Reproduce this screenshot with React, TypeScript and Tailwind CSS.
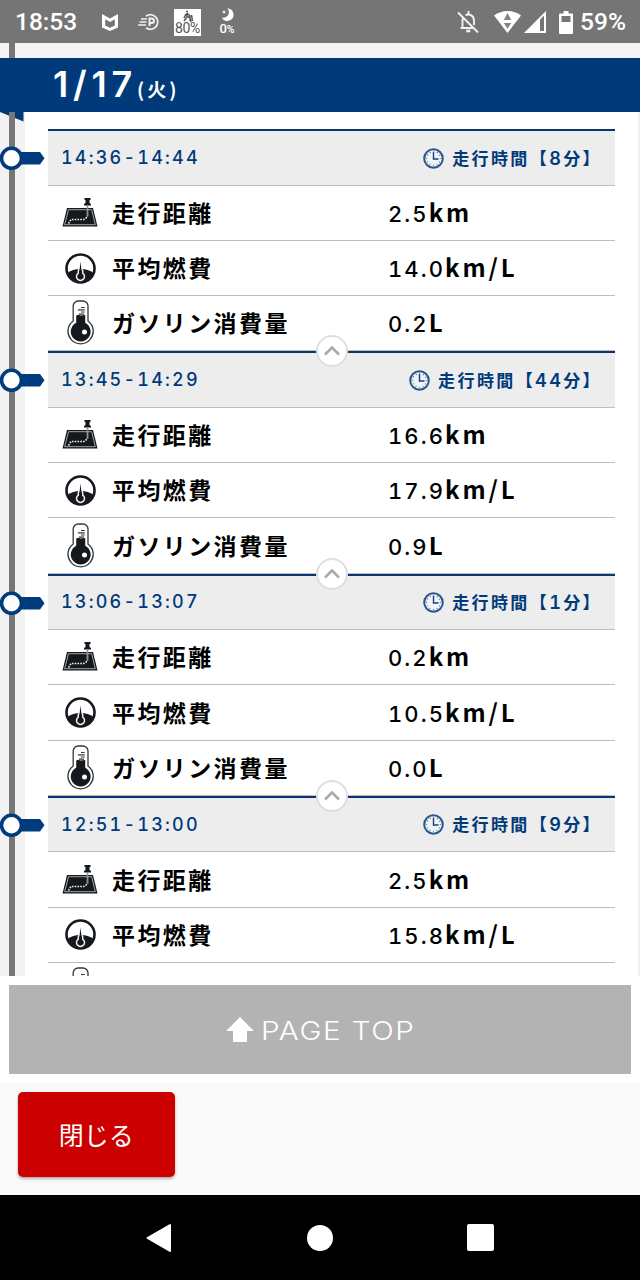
import React from 'react';

interface Trip {
  time: string;
  minutes: string;
  distance: string;
  mileage: string;
  fuel?: string;
}

const trips: Trip[] = [
  { time: '14:36-14:44', minutes: '8', distance: '2.5', mileage: '14.0', fuel: '0.2' },
  { time: '13:45-14:29', minutes: '44', distance: '16.6', mileage: '17.9', fuel: '0.9' },
  { time: '13:06-13:07', minutes: '1', distance: '0.2', mileage: '10.5', fuel: '0.0' },
  { time: '12:51-13:00', minutes: '9', distance: '2.5', mileage: '15.8' },
];

const MapIcon = () => (
  <svg className="h-[30px] w-[36px]" viewBox="0 0 36 30">
    <path d="M5 10h26l4.500 18.500H.5z" fill="#15191e" />
    <path d="M6.500 11.700h23.200l3.600 15H2.600z" fill="none" stroke="#aeb2b6" strokeWidth="0.900" />
    <path d="M6.500 25.500l2.500-4h13l3.500-2.500V11" fill="none" stroke="#f4f4f4" strokeWidth="1.500" strokeDasharray="1.600 1.200" />
    <path d="M22.500 0h6v2h-1v3l1.500 1v1.500h-7V6l1.500-1V2h-1z" fill="#15191e" />
    <path d="M25.500 7.500V18" stroke="#8d9195" strokeWidth="1.500" />
  </svg>
);

const GaugeIcon = () => (
  <svg className="h-[31px] w-[31px]" viewBox="0 0 31 31">
    <circle cx="15.500" cy="15.500" r="14" fill="#fff" stroke="#15191e" strokeWidth="2.600" />
    <path d="M2.500 20C6 17.200 10 16 15.500 16S25 17.200 28.500 20A14 14 0 0 1 2.500 20z" fill="#15191e" />
    <path d="M13.300 17.800l1-2h2.400l1 2v2.300a4 4 0 1 1-4.400 0z" fill="#15191e" stroke="#f2f2f2" strokeWidth="1.500" />
    <path d="M15.500 8.500l1.300 12h-2.600z" fill="#15191e" />
    <circle cx="15.500" cy="23" r="1.900" fill="#15191e" />
  </svg>
);

const ThermometerIcon = () => (
  <svg className="h-[46px] w-[27px]" viewBox="0 0 27 46">
    <path d="M6.200 21V6A5 5 0 0 1 11.200 1h4.800A5 5 0 0 1 21 6v15A12.600 12.600 0 1 1 6.200 21z" fill="#fff" stroke="#33373b" strokeWidth="1.300" />
    <path d="M9.200 15.600l2-.8 2.500.8 4.500-.5v7.700a9.900 9.900 0 1 1-9 0z" fill="#15191e" />
    <path d="M14 7.500h3.700M11 9.800h6.700M14 12h3.700M12 14.100h5" stroke="#33373b" strokeWidth="1.200" />
    <circle cx="17.500" cy="32" r="2.500" fill="#fff" />
  </svg>
);

const ClockIcon = () => (
  <svg className="h-[21px] w-[21px]" viewBox="0 0 21 21">
    <circle cx="10.500" cy="10.500" r="9.300" fill="#f1f4f8" stroke="#2c568a" strokeWidth="2" />
    <circle cx="10.500" cy="10.500" r="7" fill="none" stroke="#4f739d" strokeWidth="1.600" strokeDasharray="0.900 2.765" strokeDashoffset="0.450" />
    <path d="M10.500 4v7h5" fill="none" stroke="#173f75" strokeWidth="1.400" />
  </svg>
);

interface StatRowProps {
  icon: React.ReactNode;
  label: string;
  value?: string;
  unit: string;
}

const StatRow: React.FC<StatRowProps> = ({ icon, label, value, unit }) => (
  <div className="flex h-[55.2px] items-center border-b border-[#bdbdbd] text-black">
    <div className="flex w-[64px] shrink-0 justify-center">{icon}</div>
    {value && (
      <>
        <div className="w-[276px] shrink-0 pb-px font-['Noto_Sans_CJK_JP',sans-serif] text-[23px] leading-none font-bold tracking-[2.4px] whitespace-nowrap">
          {label}
        </div>
        <div className="flex items-baseline pb-px leading-none whitespace-nowrap">
          <span className="font-['Inter','Liberation_Sans',sans-serif] text-[22px] font-medium tracking-[2.1px] tabular-nums">{value}</span>
          <span className="font-['Noto_Sans_CJK_JP',sans-serif] text-[24px] leading-none font-bold tracking-[2.9px]">{unit}</span>
        </div>
      </>
    )}
  </div>
);

const TripBlock: React.FC<{ trip: Trip; first: boolean }> = ({ trip, first }) => (
  <section className="relative h-[222.2px] shrink-0 border-t-2 border-[#0b3470]">
    {/* Timeline marker */}
    <svg className="absolute top-[15px] left-[-48px] h-[24px] w-[46px]" viewBox="0 0 46 24">
      <path d="M20 6h20l4.500 6.200-4.500 6.300H20z" fill="#003c7d" />
      <circle cx="11.500" cy="12.300" r="10" fill="#fff" stroke="#003c7d" strokeWidth="3.600" />
    </svg>

    {!first && (
      <button className="absolute top-[-18px] left-[268px] flex h-[32px] w-[32px] items-center justify-center rounded-full border-2 border-[#dedede] bg-white">
        <svg className="h-[10px] w-[16px]" viewBox="0 0 16 10">
          <path d="M1 8.500l7-7 7 7" fill="none" stroke="#aaa" strokeWidth="2.600" />
        </svg>
      </button>
    )}

    <header className="flex h-[54.6px] items-center justify-between border-b border-[#bdbdbd] bg-[#ededed] pl-[13px] text-[#003a7a]">
      <span className="font-['Inter','Liberation_Sans',sans-serif] text-[18px] leading-none font-medium tracking-[2.2px] tabular-nums">
        {trip.time}
      </span>
      <div className="mr-[13px] flex items-center gap-[8px]">
        <ClockIcon />
        <span className="font-['Noto_Sans_CJK_JP',sans-serif] text-[17px] leading-none font-bold tracking-[2.4px] whitespace-nowrap">
          走行時間【<span className="font-['Inter','Liberation_Sans',sans-serif] text-[18px] font-semibold tabular-nums">{trip.minutes}</span>分】
        </span>
      </div>
    </header>

    <StatRow icon={<MapIcon />} label="走行距離" value={trip.distance} unit="km" />
    <StatRow icon={<GaugeIcon />} label="平均燃費" value={trip.mileage} unit="km/L" />
    <StatRow icon={<ThermometerIcon />} label="ガソリン消費量" value={trip.fuel} unit="L" />
  </section>
);

const StatusBar = () => (
  <div className="flex h-[43px] shrink-0 items-center bg-[#757575] pt-px pr-[14px] pl-[15px] font-['Roboto',sans-serif] font-medium text-white">
    <span className="w-[87px] text-[24.500px] leading-none">18:53</span>
    <svg className="h-[17px] w-[16px]" viewBox="0 0 16 17">
      <path d="M0 0l8 4.500L16 0v13.500L8 17l-8-3.500zM3.200 5.300v6.200L8 13.700l4.800-2.200V5.300L8 8z" fill="#fff" fillRule="evenodd" />
    </svg>
    <svg className="ml-[20px] h-[18px] w-[22px]" viewBox="0 0 22 18" fill="none" stroke="#f0f0f0" strokeWidth="1.700">
      <path d="M8 3.200A7.300 7.300 0 1 1 8 14.800M3 6h6M1.500 9h7M0 12h8" />
      <path d="M11.500 13V5.500h2.200a2.100 2.100 0 0 1 0 4.600h-2" strokeWidth="2" />
    </svg>
    <div className="ml-[14px] flex h-[27px] w-[27px] flex-col items-center bg-white text-[#555]">
      <svg className="mt-px h-[12px] w-[12px] shrink-0" viewBox="0 0 12 12" fill="none" stroke="#555" strokeWidth="1.500">
        <path d="M4 1.500h2M5 3v4l-3 4M5 6l3 2 1 4M5 3l3 3v5M2 8l2-4M9.500 5l1 6" />
      </svg>
      <span className="text-[14px] leading-[13px] font-normal tracking-[-0.3px]">80%</span>
    </div>
    <div className="ml-[17px] flex w-[18px] flex-col items-center">
      <svg className="h-[13px] w-[13px]" viewBox="0 0 13 13">
        <path d="M6 .5A6.200 6.200 0 1 1 .7 9.500C4 10.300 7.200 8.500 7.700 5.500S7.200 1.300 6 .5z" fill="#fff" />
        <circle cx="3" cy="4" r="1.500" fill="#e6e6e6" />
      </svg>
      <span className="mt-[2px] text-[13px] leading-[12px] whitespace-nowrap">0<span className="text-[10.500px]">%</span></span>
    </div>

    <div className="ml-auto flex items-center">
      <svg className="h-[22px] w-[22px]" viewBox="0 0 22 22" fill="none" stroke="#f2f2f2" strokeWidth="1.900">
        <path d="M1 1.500l20 20M5.500 16.500V9.500c0-1 .3-2 .8-2.900M8.500 4.200C12.500 2.200 17 5 17 9.500V14M3.500 17h13M11.500 0v3.500" />
        <path d="M9.300 20h4" strokeWidth="2.600" />
      </svg>
      <svg className="ml-[15px] h-[22px] w-[27px]" viewBox="0 0 27 22">
        <path d="M0 4.500C8-1.500 19-1.500 27 4.500L13.500 22z" fill="#fff" />
        <path d="M13.500 2l3.700 7H9.800zM9.800 12h7.400l-3.700 6z" fill="#858585" />
      </svg>
      <svg className="ml-[3px] h-[22px] w-[22px]" viewBox="0 0 22 22">
        <path d="M22 0v22H0z" fill="#fff" />
        <path d="M16 8.500l4-4V20h-4z" fill="#757575" />
      </svg>
      <svg className="ml-[13px] h-[23px] w-[14px]" viewBox="0 0 14 23">
        <path d="M4.500 0h5v2.500H13a1 1 0 0 1 1 1V22a1 1 0 0 1-1 1H1a1 1 0 0 1-1-1V3.500a1 1 0 0 1 1-1h3.500z" fill="#fff" />
        <path d="M2.500 5h9v6h-9z" fill="#757575" />
      </svg>
      <span className="ml-[7px] text-[24.500px] leading-none">59%</span>
    </div>
  </div>
);

const App: React.FC = () => {
  return (
    <div className="flex h-[1280px] w-[640px] flex-col overflow-hidden bg-white">
      <StatusBar />

      {/* Driving log */}
      <main className="flex h-[933px] shrink-0 flex-col overflow-hidden">
        <div className="flex h-[15px] shrink-0 bg-[#f4f4f4] pl-[9px]">
          <div className="w-[5.500px] bg-[#777]" />
        </div>
        <h1 className="flex h-[54px] shrink-0 items-baseline bg-[#003a7a] pl-[53px] text-white">
          <span className="font-['Inter','Liberation_Sans',sans-serif] text-[36px] leading-[52px] font-semibold tracking-[4.800px]">1/17</span>
          <span className="font-['Noto_Sans_CJK_JP',sans-serif] text-[19px] leading-none font-bold tracking-[3px]">(火)</span>
        </h1>
        <div className="flex min-h-0 flex-1">
          <div className="relative flex w-[25px] shrink-0 bg-[#f2f2f2] pl-[9px]">
            <svg className="absolute top-0 left-0 h-[10px] w-[24px]" viewBox="0 0 24 10">
              <path d="M0 0h23.500v9.500z" fill="#00387a" />
            </svg>
            <div className="relative w-[5.500px] bg-[#777]" />
          </div>
          <div className="flex flex-1 flex-col overflow-visible border-r-2 border-[#f0f0f0] pt-[17.300px] pr-[23px] pl-[23px]">
            {trips.map((trip, i) => (
              <TripBlock key={trip.time} trip={trip} first={i === 0} />
            ))}
          </div>
        </div>
      </main>

      <div className="relative z-10 h-[107px] shrink-0 bg-white px-[9px] pt-[9px]">
        <button className="flex h-[89px] w-full items-center bg-[#b3b3b3] pl-[217px] text-white">
          <svg className="h-[25px] w-[28px]" viewBox="0 0 28 25">
            <path d="M14 0l14 14h-7v11H7V14H0z" fill="#fff" />
          </svg>
          <span className="origin-left scale-x-[1.16] pt-[2px] pl-[6px] font-['Inter','Liberation_Sans',sans-serif] text-[25.500px] leading-none font-light tracking-[1.300px] whitespace-nowrap">PAGE TOP</span>
        </button>
      </div>

      <footer className="relative z-10 h-[112px] shrink-0 bg-[#fafafa] pt-[9px] pl-[18px]">
        <button className="flex h-[85px] w-[156.500px] items-center justify-center rounded-[5px] bg-[#c00] font-['Noto_Sans_CJK_JP',sans-serif] text-[25px] leading-none text-white shadow-[0_2px_3px_rgba(0,0,0,0.3)]">
          閉じる
        </button>
      </footer>

      <nav className="relative z-10 flex h-[85px] shrink-0 items-center gap-[134px] bg-black pl-[146px]">
        <svg className="h-[30px] w-[26px]" viewBox="0 0 26 30">
          <path d="M1.500 15L24 2v26z" fill="#fff" stroke="#fff" strokeWidth="2" strokeLinejoin="round" />
        </svg>
        <div className="ml-px h-[26px] w-[26px] rounded-full bg-white" />
        <div className="h-[27px] w-[27px] rounded-[2px] bg-white" />
      </nav>
    </div>
  );
};

export default App;
